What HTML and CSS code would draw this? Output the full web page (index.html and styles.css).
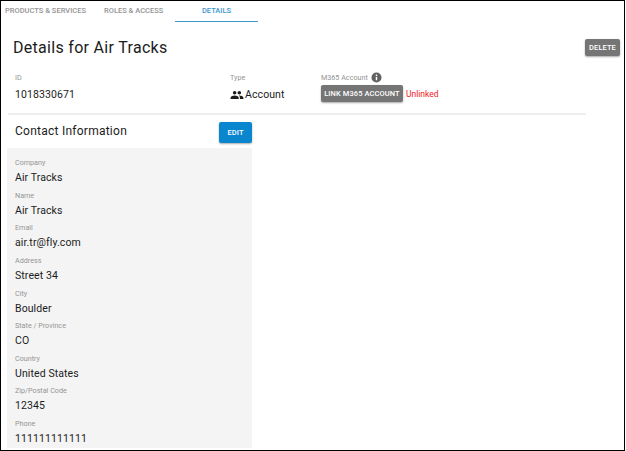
FILE: index.html
```html
<!DOCTYPE html>
<html lang="en">
<head>
    <meta charset="UTF-8">
    <meta name="viewport" content="width=device-width, initial-scale=1.0">
    <title>Details for Air Tracks</title>
    <link rel="stylesheet" href="styles.css">
</head>
<body>
    <div class="frame">
        <nav class="tabs">
            <a class="tab tab-products">Products &amp; Services</a>
            <a class="tab tab-roles">Roles &amp; Access</a>
            <a class="tab tab-details">Details</a>
        </nav>

        <header class="page-head">
            <h1>Details for Air Tracks</h1>
            <button class="btn btn-grey btn-delete" type="button">Delete</button>
        </header>

        <section class="summary">
            <div class="summary-id">
                <div class="label">ID</div>
                <div class="value">1018330671</div>
            </div>
            <div class="summary-type">
                <div class="label">Type</div>
                <div class="value type-value">
                    <svg class="people" viewBox="0 0 24 24" width="14" height="14" aria-hidden="true">
                        <path d="M16 11c1.66 0 2.99-1.34 2.99-3S17.66 5 16 5s-3 1.34-3 3 1.34 3 3 3zm-8 0c1.66 0 2.99-1.34 2.99-3S9.66 5 8 5 5 6.34 5 8s1.34 3 3 3zm0 2c-2.33 0-7 1.17-7 3.5V19h14v-2.5C15 14.17 10.33 13 8 13zm8 0c-.29 0-.62.02-.97.05 1.16.84 1.97 1.97 1.97 3.45V19h6v-2.5c0-2.33-4.67-3.5-7-3.5z"/>
                    </svg>
                    Account
                </div>
            </div>
            <div class="summary-m365">
                <div class="label m365-label">
                    M365 Account
                    <svg viewBox="0 0 24 24" width="11" height="11" aria-hidden="true">
                        <path fill="#616161" d="M12 1a11 11 0 1 0 0 22 11 11 0 0 0 0-22zm1.6 17h-3.2v-7.5h3.2V18zm0-9.5h-3.2V5.6h3.2v2.9z"/>
                    </svg>
                </div>
                <div class="m365-row">
                    <button class="btn btn-grey" type="button">Link M365 Account</button>
                    <span class="unlinked">Unlinked</span>
                </div>
            </div>
        </section>

        <hr class="divider">

        <section class="contact">
            <div class="contact-head">
                <h2>Contact Information</h2>
                <button class="btn btn-blue" type="button">Edit</button>
            </div>
            <div class="contact-card">
                <div class="field"><div class="label">Company</div><div class="value">Air Tracks</div></div>
                <div class="field"><div class="label">Name</div><div class="value">Air Tracks</div></div>
                <div class="field"><div class="label">Email</div><div class="value">air.tr@fly.com</div></div>
                <div class="field"><div class="label">Address</div><div class="value">Street 34</div></div>
                <div class="field"><div class="label">City</div><div class="value">Boulder</div></div>
                <div class="field"><div class="label">State / Province</div><div class="value">CO</div></div>
                <div class="field"><div class="label">Country</div><div class="value">United States</div></div>
                <div class="field"><div class="label">Zip/Postal Code</div><div class="value">12345</div></div>
                <div class="field"><div class="label">Phone</div><div class="value">111111111111</div></div>
            </div>
        </section>
    </div>
</body>
</html>
```

FILE: styles.css
```css
html,
body {
    margin: 0;
    padding: 0;
    background-color: #fff;
}

body {
    font-family: Roboto, "Liberation Sans", sans-serif;
    color: #1c1c1c;
}

.frame {
    box-sizing: border-box;
    width: 625px;
    height: 451px;
    border: 1px solid #000;
    overflow: hidden;
}

.tabs {
    display: flex;
    height: 21px;
}

.tab {
    box-sizing: border-box;
    height: 21px;
    padding-top: 4px;
    font-size: 7.5px;
    line-height: 12px;
    font-weight: 500;
    text-align: center;
    text-transform: uppercase;
    white-space: nowrap;
    color: #949494;
}

.tab-products {
    width: 86px;
    padding-left: 4px;
    text-align: left;
}

.tab-roles {
    width: 88px;
    padding-left: 17px;
    text-align: left;
}

.tab-details {
    width: 83px;
    color: #3d96cf;
    border-bottom: 1px solid #3d96cf;
}

.page-head {
    display: flex;
    justify-content: space-between;
    align-items: flex-start;
    padding: 15px 4px 0 12px;
    height: 50px;
    box-sizing: border-box;
}

h1 {
    margin: 0;
    font-size: 16px;
    line-height: 22px;
    font-weight: 400;
    letter-spacing: 0.3px;
}

.btn {
    border: none;
    border-radius: 2px;
    font-family: inherit;
    font-weight: 500;
    font-size: 7.5px;
    letter-spacing: 0.1px;
    text-transform: uppercase;
    white-space: nowrap;
    color: #fff;
    padding: 0;
    box-shadow: 0 1px 2px rgba(0, 0, 0, 0.35);
}

.btn-grey {
    background-color: #757575;
}

.btn-blue {
    background-color: #0a86cf;
    width: 33px;
    height: 21px;
}

.btn-delete {
    width: 35px;
    height: 17px;
    margin-top: 2px;
}

.summary {
    display: flex;
    height: 41px;
    padding-left: 14px;
}

.summary-id {
    width: 215px;
}

.summary-type {
    width: 91px;
}

.label {
    font-size: 7.2px;
    line-height: 11px;
    color: #949494;
}

.value {
    font-size: 10.5px;
    line-height: 16px;
    letter-spacing: 0.1px;
    color: #1c1c1c;
}

.summary .value {
    margin-top: 4px;
}

.type-value {
    display: flex;
    align-items: center;
    gap: 1px;
}

.people {
    fill: #1c1c1c;
}

.m365-label {
    display: flex;
    align-items: center;
    gap: 3px;
    height: 11px;
}

.m365-row {
    display: flex;
    align-items: center;
    gap: 3px;
    margin-top: 2px;
}

.m365-row .btn {
    width: 82px;
    height: 17px;
}

.unlinked {
    font-size: 8.5px;
    color: #f01a24;
}

.divider {
    margin: 0 38px 0 7px;
    border: none;
    height: 2px;
    background-color: #eee;
}

.contact {
    width: 245px;
    margin-left: 6px;
}

.contact-head {
    display: flex;
    justify-content: space-between;
    align-items: flex-start;
    height: 33px;
    padding-top: 7px;
    box-sizing: border-box;
}

h2 {
    margin: 0 0 0 8px;
    font-size: 12px;
    line-height: 18px;
    font-weight: 400;
    letter-spacing: 0.25px;
}

.contact-card {
    height: 291px;
    padding: 9px 8px 0;
    background-color: #f4f4f4;
}

.field {
    height: 32.65px;
}

.field .value {
    margin-top: 2px;
}
```
